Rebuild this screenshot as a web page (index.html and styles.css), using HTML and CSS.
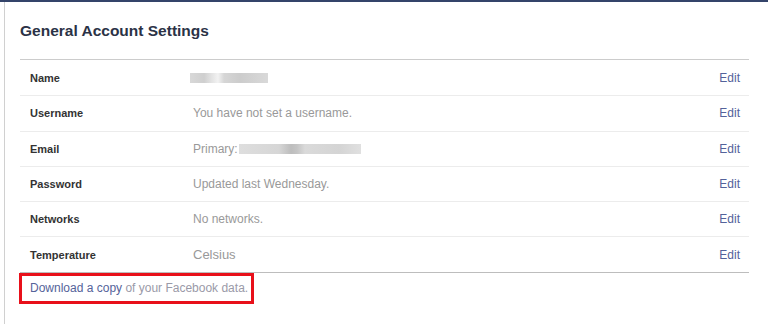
FILE: index.html
```html
<!DOCTYPE html>
<html>
  <head>
    <title>General Account Settings</title>
    <meta charset="utf-8">
    <link rel="stylesheet" href="styles.css">
  </head>
  <body>
    <div class="page">
      <h2 class="settings-title">General Account Settings</h2>

      <ul class="settings-list">
        <li class="settings-row">
          <span class="row-label">Name</span>
          <span class="row-value"><span class="blur blur-name"></span></span>
          <a class="row-edit" href="#">Edit</a>
        </li>
        <li class="settings-row">
          <span class="row-label">Username</span>
          <span class="row-value">You have not set a username.</span>
          <a class="row-edit" href="#">Edit</a>
        </li>
        <li class="settings-row">
          <span class="row-label">Email</span>
          <span class="row-value">Primary:<span class="blur blur-email"></span></span>
          <a class="row-edit" href="#">Edit</a>
        </li>
        <li class="settings-row">
          <span class="row-label">Password</span>
          <span class="row-value">Updated last Wednesday.</span>
          <a class="row-edit" href="#">Edit</a>
        </li>
        <li class="settings-row">
          <span class="row-label">Networks</span>
          <span class="row-value">No networks.</span>
          <a class="row-edit" href="#">Edit</a>
        </li>
        <li class="settings-row">
          <span class="row-label">Temperature</span>
          <span class="row-value row-value-big">Celsius</span>
          <a class="row-edit" href="#">Edit</a>
        </li>
      </ul>

      <div class="download-box">
        <a class="download-link" href="#">Download a copy</a> of your Facebook data.
      </div>
    </div>
  </body>
</html>
```

FILE: styles.css
```css
body {
  margin: 0;
  background-color: #ffffff;
  border-top: 2px solid #34446a;
  font-family: 'Liberation Sans', Arial, sans-serif;
}

.page {
  margin-left: 4px;
  border-left: 1px solid #d0d0d0;
  height: 322px;
  padding: 0 19px 0 15px;
}

.settings-title {
  margin: 0;
  padding-top: 20px;
  height: 37px;
  font-size: 15.5px;
  font-weight: bold;
  color: #2b3246;
}

.settings-list {
  list-style: none;
  margin: 0;
  padding: 0;
  border-top: 1px solid #cccccc;
  border-bottom: 1px solid #bdbdbd;
}

.settings-row {
  display: flex;
  align-items: center;
  height: 34.3px;
  padding: 0 9px 0 10px;
  border-top: 1px solid #ececec;
}

.settings-row:first-child {
  border-top: none;
  height: 35.3px;
}

.row-label {
  width: 163px;
  font-size: 11px;
  font-weight: bold;
  color: #333333;
}

.row-value {
  flex: 1;
  display: flex;
  align-items: center;
  font-size: 12px;
  color: #999999;
}

.row-value-big {
  font-size: 13px;
}

.row-edit {
  font-size: 12px;
  color: #53629a;
  text-decoration: none;
}

.blur {
  display: inline-block;
  height: 10px;
  background-color: #dcdcdc;
}

.blur-name {
  width: 78px;
  margin-left: -3px;
  background: linear-gradient(90deg, #d8d8d8 0, #cfcfcf 14px, #e4e4e4 22px, #f2f2f2 28px, #d6d6d6 34px, #cccccc 50px, #d9d9d9 78px);
}

.blur-email {
  width: 122px;
  margin-left: 1px;
  background: linear-gradient(90deg, #dedede 0, #d6d6d6 40px, #bdbdbd 52px, #c4c4c4 58px, #dadada 66px, #d4d4d4 100px, #e0e0e0 122px);
}

.download-box {
  display: inline-block;
  margin-left: -1px;
  padding: 5px 3px 6px 8px;
  border: 3px solid #e8101a;
  font-size: 12px;
  color: #9a9aa8;
}

.download-link {
  color: #55639a;
  text-decoration: none;
}
```
